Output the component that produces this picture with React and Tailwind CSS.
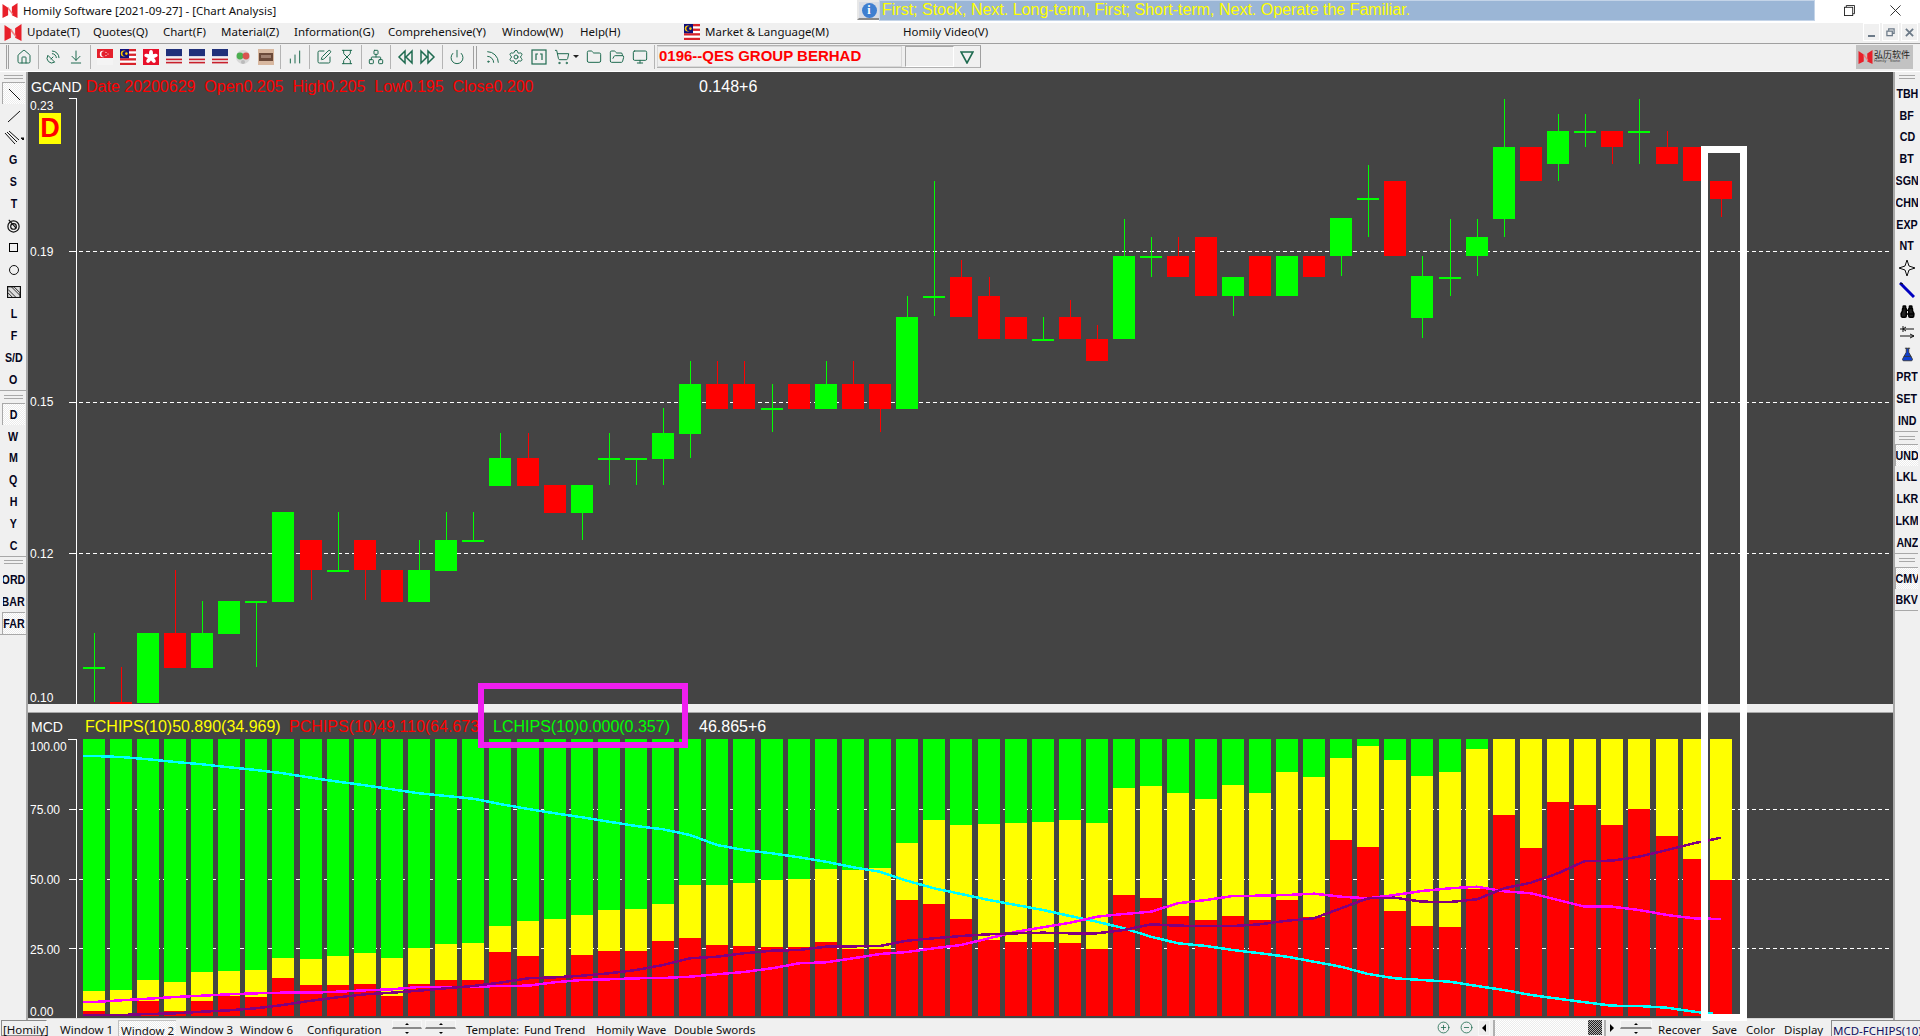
// Homily Software : fenêtre "Chart Analysis" avec chandeliers et histogramme FCHIPS/PCHIPS/LCHIPS.
import {
  House, SatelliteDish, ArrowDownToLine, ChartNoAxesColumnIncreasing, SquarePen, Hourglass,
  Network, Power, Settings, ShoppingCart, Folder, FolderOpen, Monitor, Rss, Binoculars,
  FlaskConical, CirclePlus, CircleMinus,
} from 'lucide-react';

const GREEN = '#00ff00';
const RED = '#ff0000';

// [couleur, haut du corps, bas du corps, haut mèche, bas mèche] en pixels de page
const CANDLES = [
  ['g', 667, 667, 633, 702], ['r', 702, 702, 667, 702], ['g', 633, 703], ['r', 633, 668, 570, 668],
  ['g', 633, 668, 601, 668], ['g', 601, 634], ['g', 601, 601, 601, 667], ['g', 512, 602],
  ['r', 540, 570, 540, 600], ['g', 570, 570, 512, 570], ['r', 540, 570, 540, 600], ['r', 570, 602],
  ['g', 570, 602, 540, 602], ['g', 540, 571, 512, 571], ['g', 540, 540, 512, 540], ['g', 458, 486, 433, 486],
  ['r', 458, 486, 433, 486], ['r', 485, 513], ['g', 485, 513, 485, 540], ['g', 458, 458, 433, 485],
  ['g', 458, 458, 458, 485], ['g', 433, 459, 408, 485], ['g', 384, 434, 361, 458], ['r', 384, 409, 361, 409],
  ['r', 384, 409, 361, 409], ['g', 408, 408, 384, 432], ['r', 384, 409], ['g', 384, 409, 361, 409],
  ['r', 384, 409, 361, 409], ['r', 384, 409, 384, 432], ['g', 317, 409, 296, 409], ['g', 296, 296, 181, 316],
  ['r', 277, 317, 260, 317], ['r', 296, 339, 277, 339], ['r', 317, 339], ['g', 339, 339, 317, 339],
  ['r', 317, 339, 300, 339], ['r', 339, 361, 325, 361], ['g', 256, 339, 219, 339], ['g', 256, 256, 237, 277],
  ['r', 256, 277, 237, 277], ['r', 237, 296], ['g', 277, 296, 277, 316], ['r', 256, 296], ['g', 256, 296],
  ['r', 256, 277], ['g', 218, 256, 218, 276], ['g', 198, 198, 165, 237], ['r', 181, 256], ['g', 276, 318, 256, 338],
  ['g', 277, 277, 219, 296], ['g', 237, 256, 219, 276], ['g', 147, 219, 99, 237], ['r', 147, 181],
  ['g', 131, 164, 114, 181], ['g', 131, 131, 114, 147], ['r', 131, 147, 131, 164], ['g', 131, 131, 99, 164],
  ['r', 147, 164, 131, 164], ['r', 147, 181], ['r', 181, 199, 181, 217],
];

// relevés dans le zoom (py) : y = 730 + py / 3
const YELLOW_TOP = [783, 780, 750, 756, 726, 723, 720, 684, 687, 678, 669, 684, 654, 642, 639, 588, 573, 567, 555, 540, 537, 522, 465, 465, 459, 450, 447, 417, 420, 414, 339, 270, 285, 282, 279, 276, 270, 279, 174, 168, 189, 207, 165, 189, 126, 141, 84, 48, 90, 138, 126, 57, 27, 27, 27, 27, 27, 27, 27, 27, 27];
const RED_TOP = [843, 852, 813, 843, 813, 798, 801, 744, 765, 765, 762, 798, 762, 750, 750, 666, 678, 744, 675, 663, 663, 633, 624, 645, 648, 651, 651, 636, 657, 657, 510, 522, 567, 630, 636, 636, 639, 657, 495, 504, 558, 570, 558, 570, 510, 561, 330, 351, 543, 588, 591, 477, 255, 354, 216, 225, 285, 237, 318, 387, 450];
const CYAN = [78, 81, 88, 96, 103, 112, 120, 130, 143, 155, 166, 178, 190, 198, 206, 222, 237, 250, 262, 275, 288, 298, 315, 345, 360, 370, 382, 395, 412, 425, 452, 475, 492, 510, 525, 540, 558, 575, 595, 620, 640, 648, 660, 670, 680, 695, 710, 732, 745, 750, 755, 768, 780, 795, 806, 817, 827, 828, 833, 845, 851];
const MAGENTA = [816, 811, 806, 801, 797, 793, 790, 788, 788, 785, 781, 778, 771, 771, 770, 768, 767, 757, 750, 748, 745, 744, 740, 733, 726, 715, 700, 697, 685, 672, 666, 655, 645, 625, 605, 592, 578, 560, 552, 545, 520, 510, 498, 497, 495, 491, 500, 505, 495, 483, 475, 470, 484, 490, 510, 530, 530, 540, 555, 565, 567];
const PURPLE = [855, 855, 852, 850, 845, 841, 835, 825, 812, 802, 793, 788, 782, 775, 768, 758, 745, 742, 737, 730, 720, 705, 685, 680, 670, 662, 660, 650, 649, 648, 632, 625, 618, 613, 610, 608, 610, 610, 600, 583, 587, 588, 588, 583, 572, 565, 535, 505, 503, 515, 516, 508, 475, 458, 430, 393, 392, 380, 360, 340, 323];

const cx = (i) => Math.round(92.6 + 27.12 * i);
const py = (v) => 730 + v / 3;
// les courbes partent du bord gauche de la première barre
const linePoints = (vals) => {
  const pts = vals.map((v, i) => `${i === vals.length - 1 && vals === CYAN ? cx(i) - 8 : cx(i)},${py(v).toFixed(1)}`);
  return [`82,${py(vals[0]).toFixed(1)}`, ...pts].join(' ');
};

const MENUS = [
  ['Update(T)', 66], ['Quotes(Q)', 70], ['Chart(F)', 58], ['Material(Z)', 73], ['Information(G)', 94],
  ['Comprehensive(Y)', 114], ['Window(W)', 78], ['Help(H)', 104],
];

function Logo({ className }) {
  return (
    <svg viewBox="0 0 16 16" className={className}>
      <path d="M0 1 L6 5 L6 13 L0 16 Z M16 0 L16 16 L10 13 L10 4 Z" fill="#e8202a" />
      <path d="M6 4 L11 11 L11 13 L6 7 Z" fill="#f08080" />
    </svg>
  );
}

function FlagSG() {
  return (
    <svg viewBox="0 0 16 16" className="h-4 w-4">
      <rect width="16" height="9" fill="#e4202c" /><rect y="9" width="16" height="7" fill="#f4f4f4" />
      <circle cx="6" cy="5" r="3.2" fill="#fff" /><circle cx="7.4" cy="5" r="3" fill="#e4202c" />
      <circle cx="9" cy="3.5" r=".6" fill="#fff" /><circle cx="11" cy="5" r=".6" fill="#fff" /><circle cx="9" cy="6.5" r=".6" fill="#fff" />
    </svg>
  );
}

function FlagMY() {
  return (
    <svg viewBox="0 0 16 16" className="h-4 w-4">
      <rect width="16" height="16" fill="#fff" />
      {[0, 4.6, 9.2, 13.8].map((y) => <rect key={y} y={y} width="16" height="2.3" fill="#d8232a" />)}
      <rect width="9" height="9.2" fill="#10107a" />
      <circle cx="3.8" cy="4.6" r="3" fill="#ffcc00" /><circle cx="5" cy="4.6" r="2.6" fill="#10107a" />
      <circle cx="6.4" cy="4.6" r="1.3" fill="#ffcc00" />
    </svg>
  );
}

function FlagHK() {
  return (
    <svg viewBox="0 0 16 16" className="h-4 w-4">
      <rect width="16" height="16" fill="#e8102a" />
      {[0, 72, 144, 216, 288].map((a) => (
        <ellipse key={a} cx="8" cy="4.5" rx="2" ry="3.4" fill="#fff" transform={`rotate(${a} 8 8)`} />
      ))}
    </svg>
  );
}

function FlagUS() {
  return (
    <svg viewBox="0 0 16 16" className="h-4 w-4">
      <rect width="16" height="16" fill="#f0f0f0" />
      {[0, 3.2, 6.4, 9.6, 12.8].map((y) => <rect key={y} y={y} width="16" height="1.6" fill="#c8202c" />)}
      <rect width="16" height="7" fill="#20307a" />
      <rect x="0" y="7" width="16" height="1" fill="#d8d8e8" />
    </svg>
  );
}

function Orb() {
  return (
    <svg viewBox="0 0 16 16" className="h-4 w-4">
      <circle cx="8" cy="8" r="7" fill="#d8d8d8" />
      <circle cx="5" cy="7" r="3.4" fill="#4caf50" /><circle cx="11" cy="7" r="3.4" fill="#d9534f" />
      <circle cx="8" cy="13" r="2" fill="#bbb" />
    </svg>
  );
}

function Brick() {
  return (
    <svg viewBox="0 0 16 16" className="h-4 w-4">
      <rect width="16" height="16" fill="#d8b8a0" />
      <rect x="1" y="4" width="14" height="8" fill="#6b4a3a" />
      <rect x="3" y="6" width="10" height="3" fill="#a08070" />
    </svg>
  );
}

function DoubleTriangle({ left }) {
  const d = left ? 'M8 2 L2 8 L8 14 Z M15 2 L9 8 L15 14 Z' : 'M1 2 L7 8 L1 14 Z M8 2 L14 8 L8 14 Z';
  return (
    <svg viewBox="0 0 16 16" className="h-4 w-4" fill="none" stroke="#1f6b50" strokeWidth="1.5"><path d={d} /></svg>
  );
}

function FrameIcon() {
  return (
    <svg viewBox="0 0 16 16" className="h-4 w-4" fill="none" stroke="#1f6b50" strokeWidth="1.2">
      <rect x="1" y="1" width="14" height="14" /><path d="M5 11 V5 H7 M11 11 V5 H9" />
    </svg>
  );
}

function Grip({ vertical }) {
  if (vertical) {
    return (
      <div className="flex h-6 w-[13px] shrink-0 justify-center gap-[2px] pt-[1px]">
        <div className="w-[1px] bg-[#a0a0a0]" /><div className="w-[1px] bg-[#a0a0a0]" />
      </div>
    );
  }
  return (
    <div className="flex h-full flex-col justify-center gap-[2px] px-[2px]">
      <div className="h-[1px] bg-[#a8a8a8]" /><div className="h-[1px] bg-[#a8a8a8]" />
    </div>
  );
}

function Tool({ children, w = 'w-[23px]' }) {
  return <div className={`flex h-6 shrink-0 items-center justify-center ${w}`}>{children}</div>;
}

function Sep() {
  return <div className="flex h-6 w-[6px] shrink-0 justify-center"><div className="w-[1px] bg-[#b4b4b4]" /></div>;
}

function TitleBar() {
  return (
    <div className="flex h-[23px] shrink-0 items-start bg-white">
      <Logo className="mt-[3px] ml-[2px] h-[15px] w-[16px]" />
      <span className="mt-[3px] ml-[5px] w-[834px] font-['Noto_Sans',sans-serif] text-[11.5px] leading-4 text-[#111]">
        Homily Software [2021-09-27] - [Chart Analysis]
      </span>
      <div className="flex h-[20px] w-[22px] items-center justify-center border-2 border-r-0 border-[#8a8a8a] border-t-[#e8e8e8] border-l-[#e8e8e8] bg-[#d8dce4]">
        <div className="flex h-[15px] w-[15px] items-center justify-center rounded-full bg-[#3f7fd0] font-['Liberation_Serif',serif] text-xs leading-none font-bold text-white">i</div>
      </div>
      <div className="h-[21px] w-[936px] overflow-hidden border border-[#c4d4e8] bg-[#9bb6d6] pl-[2px] font-['Liberation_Sans',sans-serif] text-base leading-[17px] whitespace-nowrap text-[#ffff00]">
        First; Stock, Next. Long-term, First; Short-term, Next. Operate the Familiar.
      </div>
      <div className="flex h-[20px] flex-1 items-center">
        <svg viewBox="0 0 12 12" className="ml-[29px] h-[11px] w-[11px]" fill="none" stroke="#222" strokeWidth="1">
          <path d="M2.5 2.5 V.5 H11.5 V9.5 H9.5" /><rect x=".5" y="2.5" width="9" height="9" />
        </svg>
        <svg viewBox="0 0 12 12" className="ml-[35px] h-[11px] w-[11px]" stroke="#222" strokeWidth="1"><path d="M.5 .5 L11.5 11.5 M11.5 .5 L.5 11.5" /></svg>
      </div>
    </div>
  );
}

function MdiButton({ children }) {
  return <div className="flex h-[18px] w-[17px] items-center justify-center border border-white bg-[#f0f0f0] text-[#6c7a88]">{children}</div>;
}

function MenuBar() {
  return (
    <div className="flex h-[20px] shrink-0 items-center bg-[#f0f0f0] pb-[2px] font-['Noto_Sans',sans-serif] text-[11.5px] text-[#111]">
      <Logo className="ml-[4px] h-[17px] w-[18px]" />
      <div className="w-[5px]" />
      {MENUS.map(([label, w]) => (
        <span key={label} className="whitespace-nowrap" style={{ width: w }}>{label}</span>
      ))}
      <FlagMY />
      <span className="ml-[5px] w-[198px] whitespace-nowrap">Market &amp; Language(M)</span>
      <span className="whitespace-nowrap">Homily Video(V)</span>
      <div className="ml-auto mr-[2px] flex gap-[2px]">
        <MdiButton><div className="mt-[7px] h-[2px] w-[7px] bg-[#6c7a88]" /></MdiButton>
        <MdiButton>
          <svg viewBox="0 0 10 10" className="h-[9px] w-[9px]" fill="none" stroke="#6c7a88" strokeWidth="1.4"><path d="M3 3 V1 H9 V6 H7" /><rect x="1" y="3.5" width="6" height="5" /></svg>
        </MdiButton>
        <MdiButton>
          <svg viewBox="0 0 10 10" className="h-[9px] w-[9px]" stroke="#6c7a88" strokeWidth="2"><path d="M1 1 L9 9 M9 1 L1 9" /></svg>
        </MdiButton>
      </div>
    </div>
  );
}

function ToolBar() {
  const icon = { size: 16, strokeWidth: 1.5, color: '#1f6b50' };
  return (
    <div className="flex h-[29px] shrink-0 items-center border-y border-t-[#a0a0a0] border-b-white bg-[#f0f0f0] pb-[2px]">
      <div className="w-[6px]" />
      <div className="flex h-6 w-[6px] shrink-0 gap-[1px]">
        <div className="w-[1px] bg-[#a0a0a0]" /><div className="w-[1px] bg-[#a0a0a0]" />
      </div>
      <Tool><House {...icon} /></Tool>
      <Sep />
      <Tool><SatelliteDish {...icon} /></Tool>
      <Tool><ArrowDownToLine {...icon} /></Tool>
      <Sep />
      <Tool><FlagSG /></Tool>
      <Tool><FlagMY /></Tool>
      <Tool><FlagHK /></Tool>
      <Tool><FlagUS /></Tool>
      <Tool><FlagUS /></Tool>
      <Tool><FlagUS /></Tool>
      <Tool><Orb /></Tool>
      <Tool><Brick /></Tool>
      <Sep />
      <Tool><ChartNoAxesColumnIncreasing {...icon} /></Tool>
      <Sep />
      <Tool><SquarePen {...icon} /></Tool>
      <Tool><Hourglass {...icon} /></Tool>
      <Sep />
      <Tool><Network {...icon} /></Tool>
      <Sep />
      <Tool><DoubleTriangle left /></Tool>
      <Tool><DoubleTriangle /></Tool>
      <Sep />
      <Tool><Power {...icon} /></Tool>
      <Grip vertical />
      <Tool><Rss {...icon} /></Tool>
      <Tool><Settings {...icon} /></Tool>
      <Tool><FrameIcon /></Tool>
      <Tool w="w-[32px]">
        <ShoppingCart {...icon} />
        <div className="ml-[3px] h-0 w-0 border-x-[3px] border-t-[3px] border-x-transparent border-t-[#222]" />
      </Tool>
      <Tool><Folder {...icon} /></Tool>
      <Tool><FolderOpen {...icon} /></Tool>
      <Tool><Monitor {...icon} /></Tool>
      <Sep />
      <div className="flex h-[23px] items-center border-y border-[#b0b0b0] border-r border-r-[#a0a0a0]">
        <div className="flex h-[21px] w-[245px] items-center border border-[#d8d8d8] pl-[1px] font-['Liberation_Sans',sans-serif] text-[15px] font-bold whitespace-nowrap text-[#ff0000]">
          0196--QES GROUP BERHAD
        </div>
        <div className="ml-[3px] h-[21px] w-[49px] border border-t-[#a8a8a8] border-r-white border-b-white border-l-[#a8a8a8]" />
        <div className="flex w-[26px] justify-center">
          <div className="flex h-4 w-4 items-center justify-center">
            <svg viewBox="0 0 14 14" className="h-[14px] w-[14px]" fill="none" stroke="#1f6b50" strokeWidth="1.6"><path d="M1 2 H13 L7 13 Z" /></svg>
          </div>
        </div>
      </div>
      <div className="ml-auto mr-[7px] flex h-[24px] w-[57px] items-center gap-[1px] bg-[#c2c2c2] pl-[2px]">
        <Logo className="h-[14px] w-[15px]" />
        <div className="flex flex-col items-start leading-none">
          <span className="font-['Noto_Sans_CJK_SC',sans-serif] text-[9px] whitespace-nowrap text-[#222]">弘历软件</span>
          <span className="font-['Liberation_Sans',sans-serif] text-[4px] whitespace-nowrap text-[#444]">Homily · Stone</span>
        </div>
      </div>
    </div>
  );
}

function Letter({ children, pressed }) {
  return (
    <div className={`flex h-[22px] w-[23px] items-center justify-center overflow-hidden border-t border-l font-['Liberation_Sans',sans-serif] text-[13px] leading-none font-bold text-[#050520] ${pressed ? "border-[#a8a8a8] bg-[repeating-conic-gradient(#ffffff_0_25%,#ececec_0_50%)] bg-[length:2px_2px]" : 'border-transparent'}`}>
      <span className="scale-x-[0.82] whitespace-nowrap">{children}</span>
    </div>
  );
}

function SideIcon({ children, pressed }) {
  return (
    <div className={`flex h-[22px] w-[23px] items-center justify-center border-t border-l ${pressed ? "border-[#a8a8a8] bg-[repeating-conic-gradient(#ffffff_0_25%,#ececec_0_50%)] bg-[length:2px_2px]" : 'border-transparent'}`}>
      {children}
    </div>
  );
}

function SideGroup({ children, grip = 'h-[10px]', tight = false }) {
  return (
    <div className={`flex w-full flex-col items-center border-b border-[#a8a8a8] ${tight ? '[&>div:not(:first-child)]:h-[21.8px]' : ''}`}>
      <div className={`w-full pr-[1px] pl-[2px] ${grip}`}><Grip /></div>
      {children}
    </div>
  );
}

function LeftBar() {
  return (
    <div className="flex w-[28px] shrink-0 flex-col border-r-2 border-[#a8a8a8] bg-[#f0f0f0]">
      <SideGroup>
        <SideIcon pressed><svg viewBox="0 0 16 16" className="h-4 w-4" stroke="#111"><path d="M3 3 L14 14" /></svg></SideIcon>
        <SideIcon><svg viewBox="0 0 16 16" className="h-4 w-4" stroke="#111"><path d="M2 14 L14 3" /></svg></SideIcon>
        <SideIcon>
          <svg viewBox="0 0 20 16" className="h-4 w-5" stroke="#111"><path d="M1 3 L11 14 M3 2 L13 12 M5 1 L15 10" /><path d="M17 8 H21 L19 10 Z" fill="#111" /></svg>
        </SideIcon>
        {['G', 'S', 'T'].map((l) => <Letter key={l}>{l}</Letter>)}
        <SideIcon>
          <svg viewBox="0 0 16 16" className="h-[15px] w-[15px]" fill="none" stroke="#111" strokeWidth="1.3"><circle cx="8" cy="9" r="6" /><circle cx="8" cy="9" r="3" /><path d="M3 2 L11 11" /></svg>
        </SideIcon>
        <SideIcon><div className="h-[9px] w-[9px] border border-black" /></SideIcon>
        <SideIcon><div className="h-[10px] w-[10px] rounded-full border border-[#111]" /></SideIcon>
        <SideIcon>
          <svg viewBox="0 0 16 14" className="h-[12px] w-[14px]" fill="none" stroke="#111" strokeWidth="1"><rect x=".5" y=".5" width="15" height="13" fill="#ddd" strokeWidth="1.4" /><path d="M1 1 H8 L15 8 V13 M1 4 L10 13 M1 8 L6 13 M5 1 L15 11" /></svg>
        </SideIcon>
        {['L', 'F', 'S/D', 'O'].map((l) => <Letter key={l}>{l}</Letter>)}
      </SideGroup>
      <SideGroup grip="h-[12px]" tight>
        <Letter pressed>D</Letter>
        {['W', 'M', 'Q', 'H', 'Y', 'C'].map((l) => <Letter key={l}>{l}</Letter>)}
      </SideGroup>
      <SideGroup grip="h-[11px]">
        <Letter>ORD</Letter>
        <Letter>BAR</Letter>
        <Letter pressed>FAR</Letter>
      </SideGroup>
    </div>
  );
}

function RightBar() {
  return (
    <div className="flex w-[27px] shrink-0 flex-col border-l-2 border-[#a8a8a8] bg-[#f0f0f0] pr-[2px]">
      <SideGroup tight>
        {['TBH', 'BF', 'CD', 'BT', 'SGN', 'CHN', 'EXP', 'NT'].map((l) => <Letter key={l}>{l}</Letter>)}
        <SideIcon>
          <svg viewBox="0 0 16 16" className="h-4 w-4" fill="none" stroke="#111"><path d="M8 0 L10 6 L16 8 L10 10 L8 16 L6 10 L0 8 L6 6 Z" /></svg>
        </SideIcon>
        <SideIcon>
          <svg viewBox="0 0 16 16" className="h-4 w-4"><path d="M1 1 L15 15" stroke="#0000c0" strokeWidth="3" /><path d="M1 1 L4 2" stroke="#111" /></svg>
        </SideIcon>
        <SideIcon><Binoculars size={15} strokeWidth={2.4} color="#000" fill="#222" /></SideIcon>
        <SideIcon>
          <svg viewBox="0 0 16 16" className="h-4 w-4" fill="none" stroke="#111"><path d="M4 1 V7 M1 4 H15 M4 4 L7 2 M4 4 L7 6 M1 11 H15 M15 11 L11 9 M15 11 L11 13" /></svg>
        </SideIcon>
        <SideIcon><FlaskConical size={15} strokeWidth={1.4} color="#333" fill="#1040d0" /></SideIcon>
        {['PRT', 'SET', 'IND'].map((l) => <Letter key={l}>{l}</Letter>)}
      </SideGroup>
      <SideGroup grip="h-[12px]" tight>
        <Letter pressed>UND</Letter>
        {['LKL', 'LKR', 'LKM', 'ANZ'].map((l) => <Letter key={l}>{l}</Letter>)}
      </SideGroup>
      <SideGroup grip="h-[13px]" tight>
        <Letter pressed>CMV</Letter>
        <Letter>BKV</Letter>
      </SideGroup>
    </div>
  );
}

function GridLine({ y }) {
  return (
    <g shapeRendering="crispEdges">
      <line x1="68" x2="75" y1={y} y2={y} stroke="#fff" />
      <line x1="78" x2="1891" y1={y} y2={y} stroke="#fff" strokeDasharray="4 3" />
    </g>
  );
}

function CandleChart() {
  return (
    <svg viewBox="28 72 1863 632" className="absolute inset-0 h-full w-full" shapeRendering="crispEdges">
      <line x1="75" x2="75" y1="98" y2="704" stroke="#fff" />
      <line x1="68" x2="75" y1="98.5" y2="98.5" stroke="#fff" />
      {[251, 402, 553].map((y) => <GridLine key={y} y={y} />)}
      {CANDLES.map(([c, top, bottom, hi, lo], i) => {
        const x = cx(i);
        const fill = c === 'g' ? GREEN : RED;
        return (
          <g key={i}>
            {hi !== undefined && <rect x={x} y={hi} width="1" height={lo - hi} fill={fill} />}
            {top === bottom
              ? <rect x={x - 11} y={top} width="22" height="1.5" fill={fill} />
              : <rect x={x - 11} y={top} width="22" height={bottom - top} fill={fill} />}
          </g>
        );
      })}
    </svg>
  );
}

function ChipChart() {
  return (
    <svg viewBox="28 713 1863 305" className="absolute inset-0 h-full w-full">
      <g shapeRendering="crispEdges">
        <line x1="75" x2="75" y1="739" y2="1018" stroke="#fff" />
        <line x1="67" x2="75" y1="739.5" y2="739.5" stroke="#fff" />
        {[809, 879, 948].map((y) => <GridLine key={y} y={y} />)}
        {YELLOW_TOP.map((yt, i) => {
          const x = cx(i) - 11;
          const y1 = py(yt);
          const y2 = py(RED_TOP[i]);
          return (
            <g key={i}>
              <rect x={x} y="739" width="22" height={y1 - 739} fill={GREEN} />
              <rect x={x} y={y1} width="22" height={y2 - y1} fill="#ffff00" />
              <rect x={x} y={y2} width="22" height={1016 - y2} fill={RED} />
            </g>
          );
        })}
        <polyline points={linePoints(CYAN)} fill="none" stroke="#00ffff" strokeWidth="2.5" />
        <polyline points={linePoints(MAGENTA)} fill="none" stroke="#ff00ff" strokeWidth="2.5" />
        <polyline points={linePoints(PURPLE)} fill="none" stroke="#800080" strokeWidth="2.5" />
      </g>
    </svg>
  );
}

function AxisLabel({ y, children }) {
  return (
    <span className="absolute left-[2px] text-xs leading-none text-white" style={{ top: y }}>{children}</span>
  );
}

function Charts() {
  return (
    <div className="flex min-w-0 flex-1 flex-col font-['Liberation_Sans',sans-serif]">
      <div className="relative h-[632px] overflow-hidden bg-[#444444]">
        <CandleChart />
        <div className="relative flex h-[30px] items-center pl-[3px] whitespace-pre">
          <span className="w-[55px] text-sm text-white">GCAND</span>
          <span className="w-[613px] text-base text-[#ff0000]">Date 20200629  Open0.205  High0.205  Low0.195  Close0.200</span>
          <span className="text-base text-white">0.148+6</span>
        </div>
        <div className="absolute top-[41px] left-[11px] flex h-[31px] w-[22px] items-center justify-center bg-[#ffff00] text-[27px] leading-none font-bold text-[#ff0000]">D</div>
        <AxisLabel y={28}>0.23</AxisLabel>
        <AxisLabel y={174}>0.19</AxisLabel>
        <AxisLabel y={324}>0.15</AxisLabel>
        <AxisLabel y={476}>0.12</AxisLabel>
        <AxisLabel y={620}>0.10</AxisLabel>
      </div>
      <div className="h-[9px] border-b border-[#a8a8a8] bg-[#eeeeee]" />
      <div className="relative h-[305px] overflow-hidden bg-[#444444]">
        <ChipChart />
        <div className="relative flex h-[28px] items-center pl-[3px] whitespace-pre">
          <span className="w-[54px] text-sm text-white">MCD</span>
          <span className="w-[204px] text-base text-[#ffff00]">FCHIPS(10)50.890(34.969)</span>
          <span className="w-[204px] text-base text-[#ff0000]">PCHIPS(10)49.110(64.673)</span>
          <span className="w-[206px] text-base text-[#00ff00]">LCHIPS(10)0.000(0.357)</span>
          <span className="text-base text-white">46.865+6</span>
        </div>
        <AxisLabel y={28}>100.00</AxisLabel>
        <AxisLabel y={91}>75.00</AxisLabel>
        <AxisLabel y={161}>50.00</AxisLabel>
        <AxisLabel y={231}>25.00</AxisLabel>
        <AxisLabel y={293}>0.00</AxisLabel>
      </div>
      <div className="h-[2px] border-t border-[#d8d8d8] bg-[#f0f0f0]" />
    </div>
  );
}

function Spin({ w = 'w-[30px]' }) {
  return (
    <div className={`flex h-[16px] shrink-0 flex-col overflow-hidden ${w}`}>
      <div className="flex h-[9px] items-center justify-center border border-b-2 border-[#f8f8f8] border-b-[#8a8a8a] bg-[#eeeeee]">
        <div className="h-0 w-0 border-x-2 border-b-2 border-x-transparent border-b-black" />
      </div>
      <div className="flex h-[7px] items-start justify-center pt-[3px]">
        <div className="h-0 w-0 border-x-2 border-t-2 border-x-transparent border-t-black" />
      </div>
    </div>
  );
}

function StatusBar() {
  return (
    <div className="flex h-[16px] shrink-0 items-start overflow-hidden bg-[#f0f0f0] font-['Noto_Sans',sans-serif] text-[11.5px] leading-[19px] whitespace-nowrap text-[#111]">
      <span className="ml-[1px] h-[16px] w-[46px] shrink-0 border border-[#8a8a8a] border-r-[#f8f8f8] pl-[1px] leading-[17px]">[Homily]</span>
      <span className="ml-[13px] w-[58px] shrink-0">Window 1</span>
      <span className="w-[58px] shrink-0 border-t border-l border-[#c0c0c0] bg-[repeating-conic-gradient(#ffffff_0_25%,#ececec_0_50%)] bg-[length:2px_2px] pl-[2px]">Window 2</span>
      <span className="ml-[4px] w-[60px] shrink-0">Window 3</span>
      <span className="w-[67px] shrink-0">Window 6</span>
      <span className="w-[85px] shrink-0">Configuration</span>
      <Spin />
      <div className="w-[3px] shrink-0" />
      <Spin w="w-[31px]" />
      <span className="ml-[10px] w-[58px] shrink-0">Template:</span>
      <span className="w-[72px] shrink-0">Fund Trend</span>
      <span className="w-[78px] shrink-0">Homily Wave</span>
      <span className="w-[85px] shrink-0">Double Swords</span>
      <div className="flex w-[714px] shrink-0 justify-end gap-[10px] pt-[1px]">
        <CirclePlus size={13} strokeWidth={1.5} color="#1f6b50" />
        <CircleMinus size={13} strokeWidth={1.5} color="#1f6b50" />
      </div>
      <div className="ml-[5px] flex h-[16px] w-[12px] shrink-0 items-center justify-center border border-[#f8f8f8] bg-[#eeeeee]">
        <div className="h-0 w-0 border-y-4 border-r-4 border-y-transparent border-r-black" />
      </div>
      <div className="ml-[3px] h-[16px] w-[95px] shrink-0 border-l-2 border-[#b0b0b0] bg-[repeating-conic-gradient(#ffffff_0_25%,#ececec_0_50%)] bg-[length:2px_2px]" />
      <div className="h-[15px] w-[14px] shrink-0 bg-[repeating-conic-gradient(#222222_0_25%,#b0b0b0_0_50%)] bg-[length:2px_2px]" />
      <div className="ml-[2px] flex h-[16px] w-[14px] shrink-0 items-center justify-center border-l-2 border-[#b0b0b0]">
        <div className="h-0 w-0 border-y-4 border-l-4 border-y-transparent border-l-black" />
      </div>
      <div className="w-[2px] shrink-0" />
      <Spin w="w-[32px]" />
      <span className="ml-[6px] w-[54px] shrink-0">Recover</span>
      <span className="w-[34px] shrink-0">Save</span>
      <span className="w-[38px] shrink-0">Color</span>
      <span className="w-[47px] shrink-0">Display</span>
      <div className="h-[16px] flex-1 overflow-hidden border-t border-l border-[#8a8a8a] bg-[#eeeeee] pl-[1px] text-[#101060]">MCD-FCHIPS(10)</div>
    </div>
  );
}

export default function App() {
  return (
    <div className="flex h-[1036px] w-[1920px] flex-col overflow-hidden bg-[#f0f0f0]">
      <TitleBar />
      <MenuBar />
      <ToolBar />
      <div className="relative flex min-h-0 flex-1">
        <LeftBar />
        <Charts />
        <RightBar />
        {/* annotations tracées par-dessus le graphique */}
        <div className="absolute top-[611px] left-[478px] h-[65px] w-[210px] border-[6px] border-[#f01ef0]" />
        <div className="absolute top-[74px] left-[1701px] h-[875px] w-[46px] border-[7px] border-white" />
      </div>
      <StatusBar />
    </div>
  );
}
